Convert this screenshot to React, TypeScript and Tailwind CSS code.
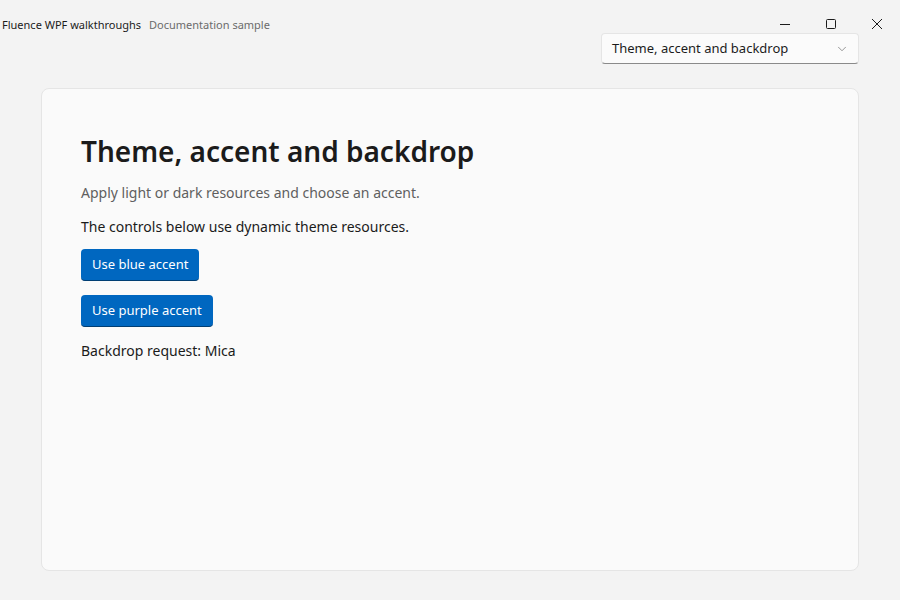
import { ChevronDown } from "lucide-react";

export default function App() {
  return (
    <div
      className="w-[900px] h-[600px] bg-[#f3f3f3] flex flex-col text-[#1b1b1b] overflow-hidden"
      style={{ fontFamily: '"Segoe UI Variable", "Segoe UI", "Noto Sans", sans-serif' }}
    >
      {/* Title bar + navigation picker */}
      <div className="flex justify-between items-start">
        <div className="h-[50px] flex items-center pl-[2px] gap-[8px] text-[11px]">
          <span className="text-[#1b1b1b]">Fluence WPF walkthroughs</span>
          <span className="text-[#6b6b6b]">Documentation sample</span>
        </div>
        <div className="flex flex-col items-end">
          <div className="flex h-[33px]">
            <button className="w-[46px] flex justify-center pt-[19px]">
              <svg width="10" height="10" viewBox="0 0 10 10" className="text-[#1b1b1b]">
                <path d="M0 5.5h10" stroke="currentColor" strokeWidth="1" />
              </svg>
            </button>
            <button className="w-[46px] flex justify-center pt-[19px]">
              <svg width="10" height="10" viewBox="0 0 10 10" className="text-[#1b1b1b]">
                <rect x="0.5" y="0.5" width="9" height="9" rx="1" fill="none" stroke="currentColor" strokeWidth="1" />
              </svg>
            </button>
            <button className="w-[46px] flex justify-center pt-[19px]">
              <svg width="10" height="10" viewBox="0 0 10 10" className="text-[#1b1b1b]">
                <path d="M0 0L10 10M10 0L0 10" stroke="currentColor" strokeWidth="1" />
              </svg>
            </button>
          </div>
          <div className="mr-[41px] w-[258px] h-[31px] flex items-center justify-between pl-[10px] pr-[9px] bg-[#fbfbfb] border border-[#e5e5e5] border-b-[#8a8a8a] rounded-[4px] text-[13px]">
            <span>Theme, accent and backdrop</span>
            <ChevronDown className="w-[14px] h-[14px] text-[#6b6b6b]" strokeWidth={1.2} />
          </div>
        </div>
      </div>

      {/* Content card */}
      <div className="mx-[41px] mt-[24px] h-[483px] bg-[#fafafa] border border-[#e5e5e5] rounded-[8px] pl-[39px] pt-[44px] flex flex-col items-start">
        <h1 className="text-[28px] leading-[36px] font-semibold">Theme, accent and backdrop</h1>
        <p className="mt-[14px] text-[14px] leading-[20px] text-[#5f5f5f]">
          Apply light or dark resources and choose an accent.
        </p>
        <p className="mt-[14px] text-[14px] leading-[20px]">The controls below use dynamic theme resources.</p>
        <button className="mt-[12px] h-[32px] px-[11px] rounded-[4px] bg-[#0067c0] border-b border-[#003e73] text-white text-[13px]">
          Use blue accent
        </button>
        <button className="mt-[14px] h-[32px] px-[11px] rounded-[4px] bg-[#0067c0] border-b border-[#003e73] text-white text-[13px]">
          Use purple accent
        </button>
        <p className="mt-[14px] text-[14px] leading-[20px]">Backdrop request: Mica</p>
      </div>
    </div>
  );
}
